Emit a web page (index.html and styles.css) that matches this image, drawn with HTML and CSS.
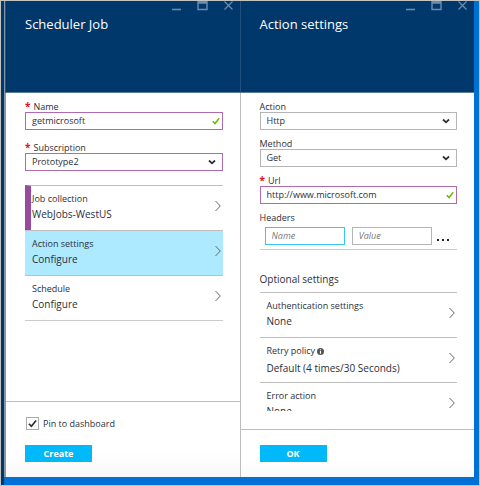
FILE: index.html
```html
<!DOCTYPE html>
<html lang="en">
<head>
<meta charset="utf-8">
<title>Scheduler Job</title>
<link rel="stylesheet" href="styles.css">
</head>
<body>
<svg class="defs" aria-hidden="true">
  <symbol id="min" viewBox="0 0 11 10"><path d="M1 8.500h9" stroke="currentColor" stroke-width="1.600"/></symbol>
  <symbol id="max" viewBox="0 0 11 10"><path d="M1 .5h9v8H1z" fill="none" stroke="currentColor" stroke-width="1.400"/><path d="M1 1.500h9" stroke="currentColor" stroke-width="2.600"/></symbol>
  <symbol id="close" viewBox="0 0 11 10"><path d="M1.500 .5l8 8M9.500 .5l-8 8" stroke="currentColor" stroke-width="1.200"/></symbol>
  <symbol id="tick" viewBox="0 0 8 8"><path d="M.8 4.200L3 6.500 7.200 1.300" fill="none" stroke="currentColor" stroke-width="1.500"/></symbol>
  <symbol id="down" viewBox="0 0 8 8"><path d="M1 2.500L4 5.300 7 2.500" fill="none" stroke="currentColor" stroke-width="1.800"/></symbol>
  <symbol id="next" viewBox="0 0 6 12"><path d="M.5 1L5.300 6 .5 11" fill="none" stroke="currentColor" stroke-width="1"/></symbol>
</svg>
<main class="portal">
  <section class="blade">
    <header class="blade-head">
      <h1>Scheduler Job</h1>
      <div class="window-tools">
        <button aria-label="Minimize"><svg><use href="#min"/></svg></button>
        <button aria-label="Maximize"><svg><use href="#max"/></svg></button>
        <button aria-label="Close"><svg><use href="#close"/></svg></button>
      </div>
    </header>
    <div class="blade-body">
      <form class="fields roomy">
        <div class="field">
          <label for="name"><span class="star">*</span>Name</label>
          <div class="control edited"><input id="name" type="text" value="getmicrosoft"><svg class="valid"><use href="#tick"/></svg></div>
        </div>
        <div class="field">
          <label for="subscription"><span class="star">*</span>Subscription</label>
          <div class="control edited"><select id="subscription"><option>Prototype2</option></select><svg><use href="#down"/></svg></div>
        </div>
      </form>
      <nav class="picker job">
        <button class="row marked"><span class="text"><span class="caption">Job collection</span><span class="value">WebJobs-WestUS</span></span><svg><use href="#next"/></svg></button>
        <button class="row selected"><span class="text"><span class="caption">Action settings</span><span class="value">Configure</span></span><svg><use href="#next"/></svg></button>
        <button class="row"><span class="text"><span class="caption">Schedule</span><span class="value">Configure</span></span><svg><use href="#next"/></svg></button>
      </nav>
    </div>
    <footer class="blade-foot">
      <div class="pin">
        <span class="box"><input id="pin" type="checkbox" checked><svg><use href="#tick"/></svg></span>
        <label for="pin">Pin to dashboard</label>
      </div>
      <button class="primary">Create</button>
    </footer>
  </section>

  <section class="blade">
    <header class="blade-head">
      <h1>Action settings</h1>
      <div class="window-tools">
        <button aria-label="Minimize"><svg><use href="#min"/></svg></button>
        <button aria-label="Maximize"><svg><use href="#max"/></svg></button>
        <button aria-label="Close"><svg><use href="#close"/></svg></button>
      </div>
    </header>
    <div class="blade-body">
      <form class="fields">
        <div class="field">
          <label for="action">Action</label>
          <div class="control"><select id="action"><option>Http</option></select><svg><use href="#down"/></svg></div>
        </div>
        <div class="field">
          <label for="method">Method</label>
          <div class="control"><select id="method"><option>Get</option></select><svg><use href="#down"/></svg></div>
        </div>
        <div class="field">
          <label for="url"><span class="star">*</span>Url</label>
          <div class="control edited"><input id="url" type="text" value="http://www.microsoft.com"><svg class="valid"><use href="#tick"/></svg></div>
        </div>
        <div class="field">
          <label for="header-name">Headers</label>
          <div class="pair">
            <div class="control focused"><input id="header-name" type="text" placeholder="Name"></div>
            <div class="control"><input type="text" placeholder="Value" aria-label="Header value"></div>
            <button class="more" type="button" aria-label="More"><i></i><i></i><i></i></button>
          </div>
        </div>
      </form>
      <h2>Optional settings</h2>
      <nav class="picker">
        <button class="row"><span class="text"><span class="caption">Authentication settings</span><span class="value">None</span></span><svg><use href="#next"/></svg></button>
        <button class="row"><span class="text"><span class="caption with-info">Retry policy <svg class="info" viewBox="0 0 8 8"><circle cx="4" cy="4" r="4" fill="#555"/><path d="M4 1.300v1.300M4 3.400v3.200" stroke="#fff" stroke-width="1.300"/></svg></span><span class="value">Default (4 times/30 Seconds)</span></span><svg><use href="#next"/></svg></button>
        <button class="row"><span class="text"><span class="caption">Error action</span><span class="value">None</span></span><svg><use href="#next"/></svg></button>
      </nav>
    </div>
    <footer class="blade-foot">
      <button class="primary">OK</button>
    </footer>
  </section>
</main>
</body>
</html>
```
FILE: styles.css
```css
* { box-sizing: border-box; }

body {
  margin: 0;
  color: #2b2f3a;
  font: 10px/12px "Open Sans", "Noto Sans", sans-serif;
}

button, input, select {
  margin: 0;
  padding: 0;
  border: 0;
  border-radius: 0;
  background: none;
  color: inherit;
  font: inherit;
  outline: 0;
  appearance: none;
}

.defs { position: absolute; width: 0; height: 0; }

.portal {
  display: flex;
  height: 100vh;
  border: 1px solid #c3c3c3;
  padding: 0 5px 8px 0;
  background: #0070d6;
}

.portal::before {
  content: "";
  width: 3px;
  margin-bottom: -8px;
  background: #00386c;
}

.blade {
  display: flex;
  flex: 1;
  flex-direction: column;
  min-width: 0;
  border-left: 1px solid #bdbdbd;
  background: #fff;
}

.blade:first-child { border-left: 2px solid #8498aa; }

.blade-head {
  display: flex;
  justify-content: space-between;
  height: 92px;
  margin-left: -1px;
  padding-left: 19px;
  border-bottom: 1px solid #5b7c9c;
  border-left: 1px solid #1f5080;
  background: #00386c;
  color: #fff;
}

h1 {
  margin: 14px 0 0;
  font-size: 13px;
  font-weight: 400;
  line-height: 18px;
}

.window-tools {
  display: flex;
  gap: 15px;
  padding-right: 6px;
  color: #6c8cab;
}

.window-tools button { height: 10px; }
.window-tools svg { display: block; width: 11px; height: 10px; }

.blade-body {
  flex: 1;
  min-height: 0;
  margin-bottom: 18px;
  padding: 8px 17px 0 19px;
  overflow: hidden;
}

.fields { display: grid; grid-template-columns: minmax(0, 1fr); gap: 8px; }
.fields.roomy { gap: 12px; }

.field label {
  display: block;
  font-size: 9px;
  line-height: 11px;
}

.star {
  margin-right: 3px;
  color: #e81123;
  font-size: 10px;
  font-weight: 700;
}

.control {
  display: flex;
  align-items: center;
  height: 18px;
  padding: 0 2px 0 6px;
  border: 1px solid #b5b5b5;
}

.control input, .control select { flex: 1; min-width: 0; font-size: 9px; }
.control svg { width: 8px; height: 8px; margin-right: 4px; }
.control .valid { margin-right: 0; color: #6cb80a; }
.control.edited { border-color: #af6bb0; }
.control.focused { border-color: #39c6f4; }
.control ::placeholder { color: #777; font-style: italic; }

.pair {
  display: flex;
  gap: 7px;
  margin-top: 4px;
  padding: 0 7px 4px 5px;
  border-bottom: 1px solid #ccc;
}

.pair .control { flex: 1; min-width: 0; }

.more {
  display: flex;
  align-items: flex-end;
  gap: 3px;
  width: 13px;
  margin-left: -2px;
  padding-bottom: 4px;
}

.more i { width: 2px; height: 2px; background: #222; }

h2 {
  margin: 21px 0 5px;
  font-size: 10px;
  font-weight: 400;
  line-height: 16px;
}

.picker { border-bottom: 1px solid #ccc; }
.picker.job { margin-top: 14px; }

.row {
  display: flex;
  align-items: flex-start;
  width: 100%;
  height: 45px;
  padding: 6px 2px 0 7px;
  border-top: 1px solid #bfbfbf;
  text-align: left;
}

.text { flex: 1; }
.caption, .value { display: block; }
.caption { font-size: 9px; line-height: 14px; }
.with-info { padding-bottom: 2px; }
.value { font-size: 10px; line-height: 16px; }
.row > svg { width: 6px; height: 12px; margin-top: 8px; color: #666; }
.info { width: 7px; height: 7px; vertical-align: -1px; }
.marked { padding-left: 1px; border-left: 6px solid #984a9c; }
.selected { background: #adeaff; }

.blade-foot {
  padding: 15px 19px;
  border-top: 1px solid #bdbdbd;
  background: linear-gradient(#fff 65%, #f7f9f8);
}

.pin {
  display: flex;
  align-items: center;
  gap: 4px;
  margin: 0 0 15px 1px;
  font-size: 9px;
}

.box { display: grid; }
.box > * { grid-area: 1 / 1; place-self: center; }
.box input { width: 13px; height: 13px; border: 1px solid #aaa; }
.box svg { width: 9px; height: 9px; pointer-events: none; }

.primary {
  display: block;
  width: 67px;
  height: 17px;
  background: #00b9fb;
  color: #fff;
  font-size: 9px;
  font-weight: 700;
}
```
